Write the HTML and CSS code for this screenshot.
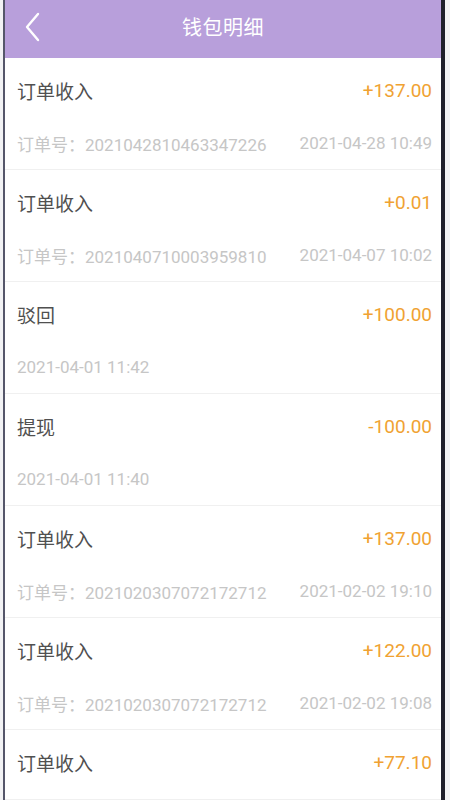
FILE: index.html
```html
<!DOCTYPE html>
<html lang="zh-CN">
<head>
<meta charset="utf-8">
<title>钱包明细</title>
<link rel="stylesheet" href="styles.css">
</head>
<body>
<div class="frame">
  <header class="topbar">
    <svg class="back" width="16" height="30" viewBox="0 0 16 30"><path d="M14 2 L3 15 L14 28" fill="none" stroke="#fff" stroke-width="2.4" stroke-linecap="round" stroke-linejoin="round"/></svg>
    <h1 class="title">钱包明细</h1>
  </header>
  <ul class="list">
    <li class="item">
      <div class="line main"><span class="name">订单收入</span><span class="amount">+137.00</span></div>
      <div class="line sub"><span>订单号：2021042810463347226</span><span>2021-04-28 10:49</span></div>
    </li>
    <li class="item">
      <div class="line main"><span class="name">订单收入</span><span class="amount">+0.01</span></div>
      <div class="line sub"><span>订单号：2021040710003959810</span><span>2021-04-07 10:02</span></div>
    </li>
    <li class="item">
      <div class="line main"><span class="name">驳回</span><span class="amount">+100.00</span></div>
      <div class="line sub"><span>2021-04-01 11:42</span></div>
    </li>
    <li class="item">
      <div class="line main"><span class="name">提现</span><span class="amount">-100.00</span></div>
      <div class="line sub"><span>2021-04-01 11:40</span></div>
    </li>
    <li class="item">
      <div class="line main"><span class="name">订单收入</span><span class="amount">+137.00</span></div>
      <div class="line sub"><span>订单号：2021020307072172712</span><span>2021-02-02 19:10</span></div>
    </li>
    <li class="item">
      <div class="line main"><span class="name">订单收入</span><span class="amount">+122.00</span></div>
      <div class="line sub"><span>订单号：2021020307072172712</span><span>2021-02-02 19:08</span></div>
    </li>
    <li class="item">
      <div class="line main"><span class="name">订单收入</span><span class="amount">+77.10</span></div>
    </li>
  </ul>
</div>
</body>
</html>
```
FILE: styles.css
```css
html, body {
  margin: 0;
  padding: 0;
  height: 100%;
  overflow: hidden;
}
body {
  background: #f2f2f4;
  font-family: "Roboto", "Noto Sans CJK SC", sans-serif;
}
.frame {
  margin-left: 3px;
  width: 436px;
  height: 800px;
  background: #ffffff;
  border-left: 2px solid #55566a;
  border-right: 4px solid #1f1f2b;
  overflow: hidden;
}
.topbar {
  height: 58px;
  background: #b89fdb;
  display: flex;
  align-items: center;
  justify-content: center;
  position: relative;
}
.back {
  position: absolute;
  left: 19px;
  top: 12px;
}
.title {
  margin: 0 0 6px 0;
  font-size: 20px;
  font-weight: 400;
  color: #ffffff;
  letter-spacing: 0.5px;
}
.list {
  list-style: none;
  margin: 0;
  padding: 0;
}
.item {
  padding: 0 9px 5px 12px;
  border-bottom: 1px solid #f0f0f0;
}
.line {
  display: flex;
  justify-content: space-between;
  align-items: center;
}
.main {
  height: 64px;
  font-size: 19px;
}
.name {
  color: #505050;
}
.amount {
  color: #f0a232;
}
.sub {
  height: 42px;
  font-size: 17px;
  color: #c6c6c6;
}
```
